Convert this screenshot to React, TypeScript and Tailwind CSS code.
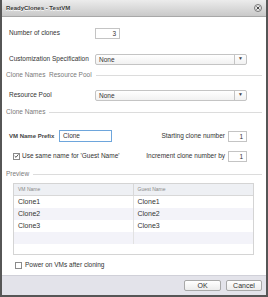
import React from 'react';

function SectionHeader({ label }: { label: string }) {
  return (
    <div className="flex items-center h-[8px] gap-[4px] text-[#7a7a7a]">
      <span className="whitespace-pre">{label}</span>
      <div className="flex-1 h-px bg-[#dcdcdc]" />
    </div>
  );
}

function Select({ value }: { value: string }) {
  return (
    <div className="flex w-[152px] h-[11px] border border-[#c4c4c4] rounded-[2px] bg-gradient-to-b from-white to-[#f1f1f1]">
      <span className="flex-1 pl-[3px] leading-[9px]">{value}</span>
      <span className="w-[12px] border-l border-[#c4c4c4] flex items-center justify-center text-[5px] text-[#444]">▼</span>
    </div>
  );
}

function SmallInput({ value, w }: { value: string; w: string }) {
  return (
    <div className={`${w} h-[11px] border border-[#c4c4c4] bg-white text-right pr-[3px] leading-[9px]`}>
      {value}
    </div>
  );
}

function CheckBox({ checked }: { checked: boolean }) {
  return (
    <div className="w-[7px] h-[7px] border border-[#8a8a8a] bg-white flex items-center justify-center">
      {checked && (
        <svg width="6" height="6" viewBox="0 0 6 6">
          <path d="M0.8 3 L2.4 4.6 L5.3 1" stroke="#333" strokeWidth="1" fill="none" />
        </svg>
      )}
    </div>
  );
}

const rows = ['Clone1', 'Clone2', 'Clone3', ''];

export default function App() {
  return (
    <div className="w-[268px] h-[297px] flex flex-col bg-white border-x-2 border-b-2 border-[#565656] font-['Liberation_Sans',Arial,sans-serif] text-[6.5px] text-[#333]">
      {/* Title bar */}
      <div className="h-[17px] flex items-center justify-between pl-[4px] pr-[4px] border-b border-[#a8a8a8] bg-gradient-to-b from-[#ececec] to-[#c9c9c9]">
        <span className="font-bold text-[6px] text-[#3a3a3a] [text-shadow:0_1px_0_#fff]">ReadyClones - TestVM</span>
        <div className="w-[8px] h-[8px] rounded-full border border-[#777] bg-[#e6e6e6] flex items-center justify-center">
          <svg width="4" height="4" viewBox="0 0 4 4">
            <path d="M0.5 0.5 L3.5 3.5 M3.5 0.5 L0.5 3.5" stroke="#444" strokeWidth="1" />
          </svg>
        </div>
      </div>

      {/* Body */}
      <div className="flex-1 flex flex-col px-[4px]">
        <div className="mt-[10px] pl-[3px] h-[12px] flex items-center">
          <span className="w-[86px]">Number of clones</span>
          <SmallInput value="3" w="w-[25px]" />
        </div>
        <div className="mt-[14px] pl-[3px] h-[12px] flex items-center">
          <span className="w-[86px] whitespace-nowrap">Customization Specification</span>
          <Select value="None" />
        </div>
        <div className="mt-[6px]">
          <SectionHeader label="Clone Names  Resource Pool" />
        </div>
        <div className="mt-[10px] pl-[3px] h-[12px] flex items-center">
          <span className="w-[86px]">Resource Pool</span>
          <Select value="None" />
        </div>
        <div className="mt-[7px]">
          <SectionHeader label="Clone Names" />
        </div>
        <div className="mt-[14px] pl-[3px] pr-[15px] h-[12px] flex items-center">
          <span className="w-[50px] whitespace-nowrap font-bold text-[6px] text-[#444]">VM Name Prefix</span>
          <div className="w-[53px] h-[12px] border border-[#6ea6dc] bg-white pl-[3px] leading-[10px]">Clone</div>
          <span className="flex-1 text-right pr-[3px]">Starting clone number</span>
          <SmallInput value="1" w="w-[19px]" />
        </div>
        <div className="mt-[8px] pl-[7px] pr-[15px] h-[12px] flex items-center">
          <CheckBox checked />
          <span className="ml-[2px]">Use same name for 'Guest Name'</span>
          <span className="flex-1 text-right pr-[3px]">Increment clone number by</span>
          <SmallInput value="1" w="w-[19px]" />
        </div>
        <div className="mt-[8px]">
          <SectionHeader label="Preview" />
        </div>

        {/* Preview table */}
        <div className="mt-[5px] ml-[7px] mr-[8px] h-[72px] border border-[#d4d4d4] bg-white">
          <div className="grid grid-cols-2 h-[12px] bg-[#eef0f4] border-b border-[#d8d8d8] text-[5px] text-[#888]">
            <span className="pl-[4px] leading-[11px] border-r border-[#d8d8d8]">VM Name</span>
            <span className="pl-[4px] leading-[11px]">Guest Name</span>
          </div>
          {rows.map((r, i) => (
            <div
              key={i}
              className={`grid grid-cols-2 h-[12px] text-[7px] ${i % 2 === 1 ? 'bg-[#f3f3f9]' : 'bg-white'}`}
            >
              <span className="pl-[4px] leading-[12px] border-r border-[#e2e2e2]">{r}</span>
              <span className="pl-[4px] leading-[12px]">{r}</span>
            </div>
          ))}
        </div>

        <div className="mt-[5px] pl-[9px] h-[10px] flex items-center">
          <CheckBox checked={false} />
          <span className="ml-[3px]">Power on VMs after cloning</span>
        </div>
      </div>

      {/* Footer */}
      <div className="h-[20px] flex items-center justify-end gap-[5px] pr-[4px] bg-[#e3e3ea] border-t border-[#d0d0d8]">
        <button className="w-[37px] h-[11px] border border-[#a8a8a8] rounded-[2px] bg-gradient-to-b from-white to-[#ececec] text-[7px] leading-[9px] text-[#333]">
          OK
        </button>
        <button className="w-[36px] h-[11px] border border-[#a8a8a8] rounded-[2px] bg-gradient-to-b from-white to-[#ececec] text-[7px] leading-[9px] text-[#333]">
          Cancel
        </button>
      </div>
    </div>
  );
}
